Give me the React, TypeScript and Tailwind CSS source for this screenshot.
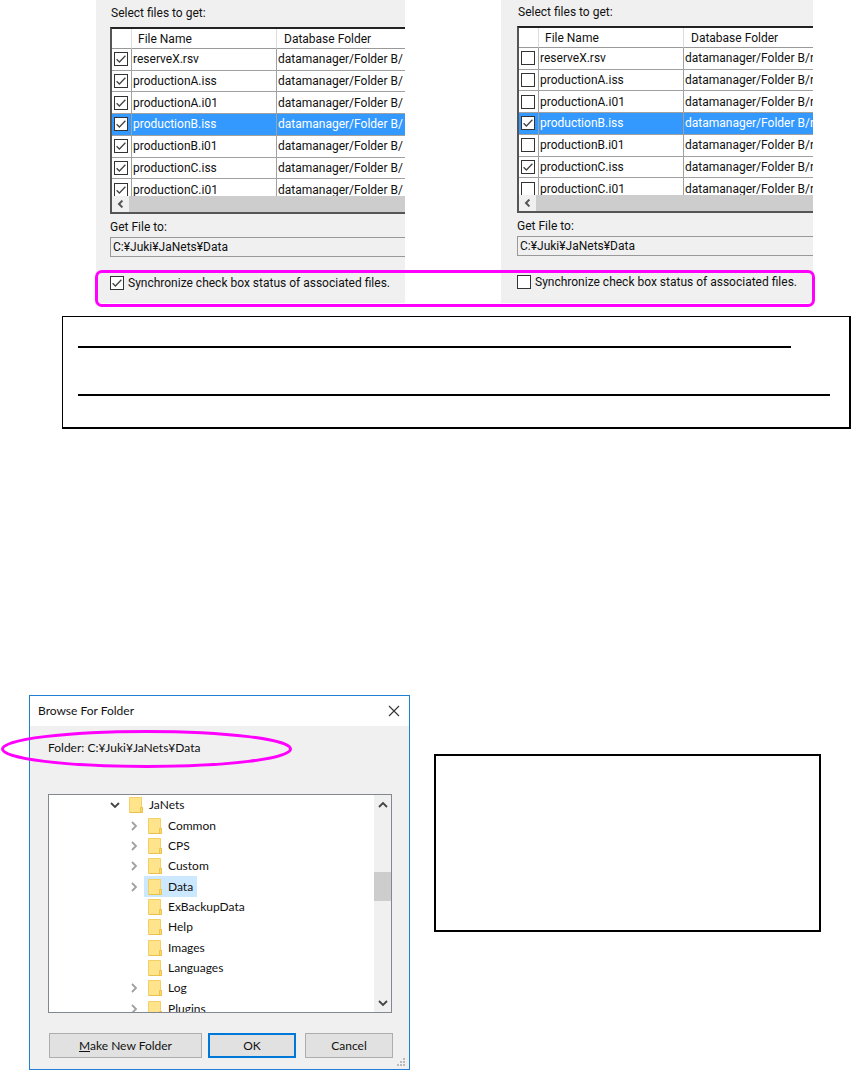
import { useState } from "react";

type FileRow = { name: string; checked: boolean };

const FILE_NAMES = [
  "reserveX.rsv",
  "productionA.iss",
  "productionA.i01",
  "productionB.iss",
  "productionB.i01",
  "productionC.iss",
  "productionC.i01",
];

const CHECKED_WITHOUT_SYNC = ["productionB.iss", "productionC.iss"];

function CheckBox({ id, label, initial }: { id: string; label?: string; initial: boolean }) {
  const [on, setOn] = useState(initial);
  return (
    <span className="grid h-[14px] w-[14px] shrink-0">
      <input
        id={id}
        type="checkbox"
        aria-label={label}
        checked={on}
        onChange={(e) => setOn(e.target.checked)}
        className="col-start-1 row-start-1 m-0 h-[14px] w-[14px] appearance-none border border-[#333] bg-white"
      />
      {on && (
        <svg viewBox="0 0 14 14" className="pointer-events-none col-start-1 row-start-1 h-[14px] w-[14px]" fill="none" stroke="#444" strokeWidth="1.3">
          <path d="M2.6 7.2 5.4 10 11.4 3.8" />
        </svg>
      )}
    </span>
  );
}

function FilePanel({
  id,
  rows,
  folder,
  sync,
  className,
}: {
  id: string;
  rows: FileRow[];
  folder: string;
  sync: boolean;
  className: string;
}) {
  return (
    <section className={`min-w-0 overflow-hidden bg-[#f0f0f0] text-[12px] leading-4 text-[#111] ${className}`}>
      <p className="pl-px">Select files to get:</p>
      <div className="mt-[6px] border-y-2 border-l-2 border-[#555] border-t-[#222] bg-white">
        <div className="h-[167px] overflow-hidden">
          <table className="h-[172px] w-full table-fixed border-separate border-spacing-0 text-left">
            <colgroup>
              <col className="w-[20px]" />
              <col className="w-[145px]" />
              <col />
            </colgroup>
            <thead>
              <tr className="h-[20px]">
                <th className="border-r border-b border-r-[#ddd] border-b-[#999] p-0" aria-label="Selected" />
                <th className="border-r border-b border-r-[#ddd] border-b-[#999] p-0 pl-[6px] font-normal">File Name</th>
                <th className="border-b border-[#999] p-0 pl-[7px] font-normal whitespace-nowrap">Database Folder</th>
              </tr>
            </thead>
            <tbody>
              {rows.map((row) => (
                <tr key={row.name} className={row.name === "productionB.iss" ? "bg-[#3399ff] text-white" : "bg-white"}>
                  <td className="border-r border-b border-[#a0a0a0] p-0 pl-[2px]">
                    <CheckBox id={`${id}-${row.name}`} label={row.name} initial={row.checked} />
                  </td>
                  <td className="border-r border-b border-[#a0a0a0] p-0 pl-px whitespace-nowrap">{row.name}</td>
                  <td className="overflow-hidden border-b border-[#a0a0a0] p-0 pl-px whitespace-nowrap">{folder}</td>
                </tr>
              ))}
            </tbody>
          </table>
        </div>
        <div className="flex h-[16px] bg-[#cdcdcd]">
          <button type="button" aria-label="Scroll left" className="flex w-[17px] items-center justify-center bg-[#f0f0f0]">
            <svg viewBox="0 0 8 8" className="h-2 w-2" fill="none" stroke="#555" strokeWidth="2">
              <path d="M5.4 0.6 2 4 5.4 7.4" />
            </svg>
          </button>
        </div>
      </div>
      <label htmlFor={`${id}-target`} className="mt-[5px] block">
        Get File to:
      </label>
      <input
        id={`${id}-target`}
        readOnly
        defaultValue="C:¥Juki¥JaNets¥Data"
        className="mt-[2px] block h-[20px] w-full border border-r-0 border-[#999] bg-[#f0f0f0] px-[2px] outline-none"
      />
      <div className="mt-[18px] flex items-center gap-[4px] pb-[12px]">
        <CheckBox id={`${id}-sync`} initial={sync} />
        <label htmlFor={`${id}-sync`} className="whitespace-nowrap">
          Synchronize check box status of associated files.
        </label>
      </div>
    </section>
  );
}

const FOLDERS = [
  { name: "JaNets", state: "open" },
  { name: "Common", state: "closed" },
  { name: "CPS", state: "closed" },
  { name: "Custom", state: "closed" },
  { name: "Data", state: "closed" },
  { name: "ExBackupData", state: "leaf" },
  { name: "Help", state: "leaf" },
  { name: "Images", state: "leaf" },
  { name: "Languages", state: "leaf" },
  { name: "Log", state: "closed" },
  { name: "Plugins", state: "closed" },
];

function FolderIcon() {
  return (
    <svg viewBox="0 0 14 16" className="h-4 w-[14px] shrink-0">
      <path d="M0.5 0.5H12.5V10.5H13.5V15.5H0.5Z" fill="#ffe48c" stroke="#f3cf67" />
      <path d="M11.5 15V10.5H13.5V15.5H11Z" fill="#fbd96e" stroke="#e8bd45" strokeWidth="0.8" />
      <path d="M1 15.5H11" stroke="#e9c04c" />
    </svg>
  );
}

function Chevron({ direction }: { direction: "up" | "down" | "right" }) {
  const paths = {
    up: "M1 7 5 3 9 7",
    down: "M1 3 5 7 9 3",
    right: "M3 1 7 5 3 9",
  };
  return (
    <svg viewBox="0 0 10 10" className="h-[10px] w-[10px]" fill="none" stroke={direction === "right" ? "#a0a0a0" : "#444"} strokeWidth="1.8">
      <path d={paths[direction]} />
    </svg>
  );
}

function BrowseDialog() {
  const [selected, setSelected] = useState("Data");
  return (
    <section className="relative min-w-0 border border-[#1f80d6] bg-[#f0f0f0] font-[Lato,'Noto_Sans_CJK_JP',sans-serif] text-[12px] leading-4 text-[#111]">
      <header className="flex h-[30px] items-center justify-between bg-white pr-[9px] pl-[8px]">
        <h2>Browse For Folder</h2>
        <button type="button" aria-label="Close">
          <svg viewBox="0 0 12 12" className="h-3 w-3" fill="none" stroke="#333" strokeWidth="1.1">
            <path d="M1 1 11 11M11 1 1 11" />
          </svg>
        </button>
      </header>
      <p className="pt-[14px] pl-[18px]">Folder: C:¥Juki¥JaNets¥Data</p>
      <svg viewBox="0 0 292 40" className="pointer-events-none absolute top-[33px] -left-[30px] h-10 w-[292px]" fill="none" stroke="#ff00ff" strokeWidth="3">
        <ellipse cx="146.5" cy="20" rx="144" ry="17.5" />
      </svg>
      <div className="mt-[38px] mr-[17px] ml-[18px] flex h-[219px] overflow-hidden border border-[#828790] bg-white">
        <ul className="grid h-[224px] flex-1 auto-rows-fr">
          {FOLDERS.map((f) => (
            <li key={f.name} className={`flex items-center ${f.state === "open" ? "pl-[61px]" : "pl-[80px]"}`}>
              <span className="flex w-[15px] shrink-0">
                {f.state !== "leaf" && <Chevron direction={f.state === "open" ? "down" : "right"} />}
              </span>
              <button
                type="button"
                onClick={() => setSelected(f.name)}
                className={`flex h-full items-center gap-[6px] px-[4px] ${selected === f.name ? "bg-[#cce8ff]" : ""}`}
              >
                <FolderIcon />
                {f.name}
              </button>
            </li>
          ))}
        </ul>
        <div className="flex w-[17px] flex-col items-center bg-[#f0f0f0]">
          <button type="button" aria-label="Scroll up" className="flex h-[19px] items-center">
            <Chevron direction="up" />
          </button>
          <div className="mt-[58px] h-[29px] w-full bg-[#cdcdcd]" />
          <button type="button" aria-label="Scroll down" className="mt-auto flex h-[19px] items-center">
            <Chevron direction="down" />
          </button>
        </div>
      </div>
      <div className="mt-[20px] mr-[16px] mb-[11px] ml-[19px] flex h-[25px]">
        <button type="button" className="flex-1 border border-[#adadad] bg-[#e1e1e1]">
          <span className="underline">M</span>ake New Folder
        </button>
        <button type="button" className="ml-[6px] w-[88px] border-2 border-[#0078d7] bg-[#e1e1e1]">
          OK
        </button>
        <button type="button" className="ml-[9px] w-[88px] border border-[#adadad] bg-[#e1e1e1]">
          Cancel
        </button>
      </div>
      <svg viewBox="0 0 9 9" className="absolute right-[3px] bottom-[2px] h-[9px] w-[9px]" fill="#bbb">
        <path d="M6 0h2v2h-2zM3 3h2v2h-2zM6 3h2v2h-2zM0 6h2v2h-2zM3 6h2v2h-2zM6 6h2v2h-2z" />
      </svg>
    </section>
  );
}

export default function App() {
  return (
    <main className="w-full bg-white font-[Roboto,'Noto_Sans_CJK_JP',sans-serif]">
      <div className="relative grid grid-cols-[309fr_312fr] items-stretch gap-x-[96px] pr-[38px] pl-[96px]">
        <FilePanel
          id="synced"
          sync
          folder="datamanager/Folder B/"
          rows={FILE_NAMES.map((name) => ({ name, checked: true }))}
          className="pt-[5px] pl-[14px]"
        />
        <FilePanel
          id="single"
          sync={false}
          folder="datamanager/Folder B/r"
          rows={FILE_NAMES.map((name) => ({ name, checked: CHECKED_WITHOUT_SYNC.includes(name) }))}
          className="pt-[4px] pl-[16px]"
        />
        <div className="pointer-events-none absolute right-[36px] -bottom-[4px] left-[95px] h-[37px] rounded-[7px] border-3 border-[#ff00ff]" />
      </div>
      <div className="mt-[13px] ml-[62px] border-t border-r-2 border-b-2 border-l border-black pt-[29px] pr-[19px] pb-[31px] pl-[15px]">
        <hr className="mr-[39px] border-t-2 border-black" />
        <hr className="mt-[46px] border-t-2 border-black" />
      </div>
      <div className="mt-[266px] grid grid-cols-[381fr_387fr] gap-x-[24px] pr-[30px] pl-[29px]">
        <BrowseDialog />
        <div className="mt-[59px] h-[178px] border-2 border-black" />
      </div>
    </main>
  );
}
